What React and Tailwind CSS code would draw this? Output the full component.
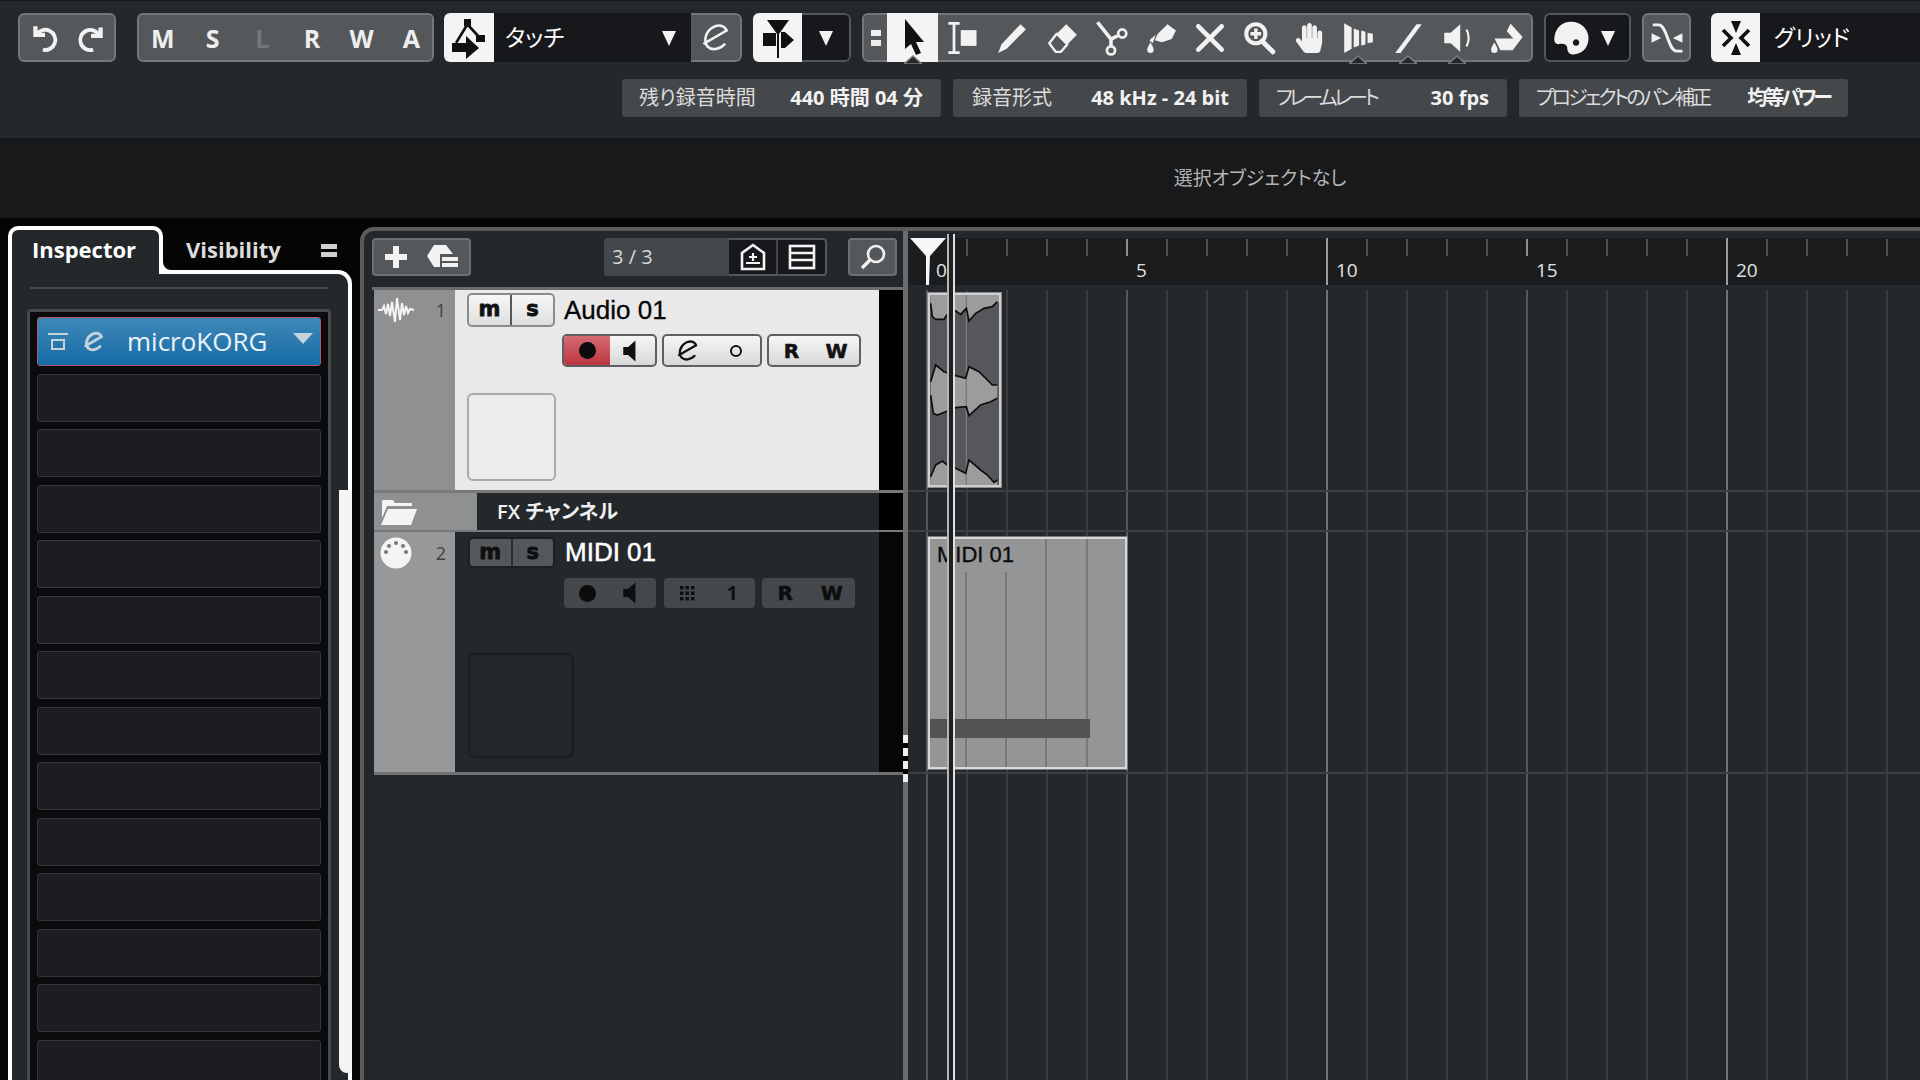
import React from 'react';
import { FaHandPaper } from 'react-icons/fa';

const Ico = ({ size = 34, box = 32, className = '', children }) => (
  <svg width={size} height={size} viewBox={`0 0 ${box} ${box}`} className={className} fill="currentColor">
    {children}
  </svg>
);

const Caret = ({ className = 'text-[#f2f2f2]' }) => (
  <svg width="16" height="18" viewBox="0 0 16 18" className={className} fill="currentColor">
    <polygon points="1,2 15,2 8,17" />
  </svg>
);

const UndoIcon = () => (
  <Ico>
    <path d="M8 13 a9.5 9.5 0 1 1 6 14" fill="none" stroke="currentColor" strokeWidth="3.6" />
    <polygon points="5,5 9,5 9,11 16,11 16,15 5,15" />
  </Ico>
);
const RedoIcon = () => (
  <Ico>
    <path d="M25 14 a9.5 9.5 0 1 0 -6 13" fill="none" stroke="currentColor" strokeWidth="3.6" />
    <polygon points="28,6 28,16 17,16 17,12 24,12 24,6" />
  </Ico>
);
const AutomationIcon = () => (
  <svg width="40" height="44" viewBox="0 0 40 44" className="text-[#111]" fill="currentColor">
    <rect x="15" y="3" width="7" height="7" />
    <path d="M18 9 L7 27 M19 9 L31 22" stroke="currentColor" strokeWidth="2.6" />
    <rect x="27" y="19" width="9" height="7" />
    <polygon points="3,27 17,27 17,20 30,32 17,43 17,36 3,36" />
  </svg>
);
const EditE = ({ size = 34, stroke = 2.4 }) => (
  <Ico size={size}>
    <path d="M5 21 L26 9 C24 4 18 3 13 6 C6 10 4 19 8 24 C12 28 19 27 24 22" fill="none" stroke="currentColor" strokeWidth={stroke} strokeLinecap="round" />
  </Ico>
);
const SnapIcon = () => (
  <svg width="40" height="44" viewBox="0 0 40 44" className="text-[#111]" fill="currentColor">
    <polygon points="9,4 31,4 21,18 19,18" />
    <rect x="19" y="14" width="2" height="28" />
    <rect x="5" y="17" width="13" height="13" />
    <polygon points="23,16 27,16 36,24 27,32 23,32" />
  </svg>
);
const ArrowIcon = () => (
  <svg width="32" height="44" viewBox="0 0 32 44" className="text-[#111]" fill="currentColor">
    <polygon points="8,3 8,33 14,28 19,39 24,37 19,26 27,26" />
  </svg>
);
const RangeIcon = () => (
  <Ico size={36}>
    <path d="M3 3 h10 M3 29 h10 M8 3 v26" stroke="currentColor" strokeWidth="2.4" fill="none" />
    <rect x="14" y="9" width="14" height="14" />
  </Ico>
);
const PencilIcon = () => (
  <Ico><polygon points="3,30 6,22 24,3 29,8 11,26" /></Ico>
);
const EraserIcon = () => (
  <Ico>
    <polygon points="20,3 30,13 21,22 11,12" />
    <path d="M11 12 L21 22 L15 29 L10 29 L4 21 Z" fill="none" stroke="currentColor" strokeWidth="2.2" strokeLinejoin="round" />
  </Ico>
);
const ScissorsIcon = () => (
  <Ico size={36}>
    <path d="M4 2 L16 17 L16 24 M16 17 L22 14" fill="none" stroke="currentColor" strokeWidth="3.2" />
    <circle cx="26" cy="12" r="3.6" fill="none" stroke="currentColor" strokeWidth="2.4" />
    <circle cx="16" cy="27" r="3.6" fill="none" stroke="currentColor" strokeWidth="2.4" />
  </Ico>
);
const GlueIcon = () => (
  <Ico>
    <polygon points="14,12 23,3 31,9 27,17 18,20 11,18" />
    <path d="M6 18 L12 13 L9 21 Z" />
    <path d="M7 20 C9 24 10 25 10 27 A3 3 0 0 1 4 27 C4 25 5 24 7 20 Z" />
  </Ico>
);
const CrossIcon = () => (
  <Ico>
    <path d="M5 5 L27 27 M27 5 L5 27" stroke="currentColor" strokeWidth="4.4" strokeLinecap="round" />
  </Ico>
);
const ZoomIcon = () => (
  <Ico>
    <circle cx="13" cy="12" r="9" fill="none" stroke="currentColor" strokeWidth="3.8" />
    <path d="M8 12 h10 M13 7 v10" stroke="currentColor" strokeWidth="3.2" />
    <path d="M19 19 L29 29" stroke="currentColor" strokeWidth="4.6" strokeLinecap="round" />
  </Ico>
);
const BarsIcon = () => (
  <Ico>
    <polygon points="3,2 10,6 10,26 3,30" />
    <polygon points="12,7 17,9 17,23 12,25" />
    <polygon points="19,9 23,10 23,22 19,23" />
    <polygon points="25,11 30,12 30,20 25,21" />
  </Ico>
);
const LineIcon = () => (
  <Ico><polygon points="4,30 24,3 29,3 9,30" /></Ico>
);
const SpeakerIcon = ({ wave = true, size = 34 }) => (
  <Ico size={size}>
    <polygon points="4,11 10,11 19,3 19,29 10,21 4,21" />
    {wave && <path d="M25 8 Q29 16 25 24" fill="none" stroke="currentColor" strokeWidth="2" />}
  </Ico>
);
const BucketIcon = () => (
  <Ico>
    <path d="M20 3 L31 15 L22 27 L11 27 L6 17 L24 17 L17 9" fill="currentColor" stroke="currentColor" strokeWidth="1" />
    <path d="M5 20 C7 24 8 25 8 27 A3 3 0 0 1 2 27 C2 25 3 24 5 20 Z" />
  </Ico>
);
const PaletteIcon = () => (
  <Ico size={40}>
    <path d="M16 3 C24 3 30 9 30 16 C30 22 27 28 19 29 C15 30 13 27 13 24 C13 21 9 20 6 21 C3 21 2 18 3 14 C4 8 9 3 16 3 Z M20 17 a2.6 2.6 0 1 0 0.1 0 Z" fillRule="evenodd" />
  </Ico>
);
const CrossfadeIcon = () => (
  <Ico size={38}>
    <path d="M4 5 L9 5 C16 5 17 27 24 27 L29 27" fill="none" stroke="currentColor" strokeWidth="2.4" />
    <polygon points="3,12 3,20 11,16" />
    <polygon points="29,12 29,20 21,16" />
  </Ico>
);
const GridSnapIcon = () => (
  <svg width="36" height="44" viewBox="0 0 36 44" className="text-[#111]" fill="currentColor">
    <polygon points="13,5 23,5 18,17" />
    <polygon points="13,39 23,39 18,27" />
    <path d="M5 14 L13 22 L5 30 M31 14 L23 22 L31 30" fill="none" stroke="currentColor" strokeWidth="3.6" />
  </svg>
);

const Notch = () => (
  <svg width="18" height="9" viewBox="0 0 18 9" className="absolute left-1/2 -translate-x-1/2 -bottom-[2px]">
    <polygon points="0,9 9,1 18,9" fill="#25282b" stroke="#7b7e81" strokeWidth="1.5" />
  </svg>
);

const tools = [
  { Icon: RangeIcon },
  { Icon: PencilIcon },
  { Icon: EraserIcon },
  { Icon: ScissorsIcon },
  { Icon: GlueIcon },
  { Icon: CrossIcon },
  { Icon: ZoomIcon },
  { Icon: () => <FaHandPaper size={30} /> },
  { Icon: BarsIcon, notch: true },
  { Icon: LineIcon, notch: true },
  { Icon: SpeakerIcon, notch: true },
  { Icon: BucketIcon },
];

const groupCls = 'flex h-[49px] rounded-[6px] border-2 border-[#73767a] bg-[#55585b] text-[#f2f2f2] overflow-hidden';
const darkGroupCls = 'flex h-[49px] rounded-[6px] border-2 border-[#54575a] bg-[#17181b] text-[#f2f2f2]';

const InfoBox = ({ w, label, value, pl, labelCls = '', valueCls = '' }) => (
  <div className={`flex h-[38px] items-center justify-between rounded-[3px] bg-[#45484b] pr-[18px] ${w} ${pl}`}>
    <span className={`text-[20px] text-[#dcdcdc] ${labelCls}`}>{label}</span>
    <span className={`text-[20px] font-bold text-[#f2f2f2] ${valueCls}`}>{value}</span>
  </div>
);

const Toolbar = () => (
  <div className="h-[138px] shrink-0 border-t border-[#15171a] bg-[#25282b] pt-[12px]">
    <div className="flex gap-[11px]">
      <div className={`${groupCls} ml-[18px] w-[98px] items-center justify-around px-[2px]`}>
        <UndoIcon />
        <RedoIcon />
      </div>
      <div className={`${groupCls} ml-[10px] w-[297px] items-center text-[25px] font-bold`}>
        <div className="-ml-[1px] flex pt-[2px]">
          {['M', 'S', 'L', 'R', 'W', 'A'].map((l) => (
            <span key={l} className={l === 'L' ? 'w-[49.7px] shrink-0 text-center text-[#74777a]' : 'w-[49.7px] shrink-0 text-center text-[#eeeeee]'}>{l}</span>
          ))}
        </div>
      </div>
      <div className="ml-[-1px] flex h-[49px] w-[298px] overflow-hidden rounded-[6px] bg-[#17181b]">
        <div className="flex w-[50px] items-center justify-center bg-[#f4f4f4]"><AutomationIcon /></div>
        <div className="flex flex-1 items-center pl-[11px] pr-[14px] text-[23px] text-white">
          <span className="flex-1">タッチ</span>
          <Caret />
        </div>
        <div className="flex w-[51px] items-center justify-center rounded-r-[6px] border-2 border-l-0 border-[#73767a] bg-[#55585b] text-[#f2f2f2]"><EditE /></div>
      </div>
      <div className="flex h-[49px] w-[98px] overflow-hidden rounded-[6px] bg-[#17181b]">
        <div className="flex w-[49px] items-center justify-center bg-[#f4f4f4]"><SnapIcon /></div>
        <div className="flex flex-1 items-center justify-center rounded-r-[6px] border-2 border-l-0 border-[#54575a]"><Caret /></div>
      </div>
      <div className="relative flex h-[49px] w-[671px] items-stretch rounded-[6px] border-2 border-[#73767a] bg-[#55585b] text-[#f2f2f2]">
        <div className="flex w-[23px] flex-col items-center justify-center gap-[4px]">
          <span className="h-[6px] w-[10px] bg-[#eeeeee]" />
          <span className="h-[6px] w-[10px] bg-[#eeeeee]" />
        </div>
        <div className="relative -my-[2px] flex w-[51px] items-center justify-center bg-[#f4f4f4]">
          <ArrowIcon />
          <Notch />
        </div>
        {tools.map(({ Icon, notch }, i) => (
          <div key={i} className="relative -my-[2px] flex flex-1 items-center justify-center">
            <Icon />
            {notch && <Notch />}
          </div>
        ))}
      </div>
      <div className={`${darkGroupCls} w-[87px] items-center pl-[5px]`}>
        <PaletteIcon />
        <span className="ml-[9px] flex"><Caret /></span>
      </div>
      <div className={`${groupCls} w-[49px] items-center justify-center`}><CrossfadeIcon /></div>
      <div className="ml-[9px] flex h-[49px] flex-1 overflow-hidden rounded-l-[6px] bg-[#17181b]">
        <div className="flex w-[49px] items-center justify-center bg-[#f4f4f4]"><GridSnapIcon /></div>
        <div className="flex flex-1 items-center pl-[14px] text-[23px] text-white">グリッド</div>
      </div>
    </div>
    <div className="ml-[622px] mt-[17px] flex gap-[12px]">
      <InfoBox w="w-[319px]" pl="pl-[17px]" label="残り録音時間" value="440 時間 04 分" />
      <InfoBox w="w-[294px]" pl="pl-[19px]" label="録音形式" value="48 kHz - 24 bit" />
      <InfoBox w="w-[248px]" pl="pl-[17px]" label="フレームレート" labelCls="tracking-[-3.5px]" value="30 fps" />
      <InfoBox w="w-[329px]" pl="pl-[17px]" label="プロジェクトのパン補正" labelCls="tracking-[-2.8px]" value="均等パワー" valueCls="tracking-[-3px]" />
    </div>
  </div>
);

const Inspector = () => (
  <div className="relative flex h-full w-[344px] shrink-0 flex-col">
    <div className="relative z-10 flex h-[48px] shrink-0 items-start">
      <div className="h-[48px] w-[155px] rounded-t-[10px] border-4 border-b-0 border-white bg-[#25282b] pl-[20px] pt-[4px] text-[22px] font-bold leading-[30px] text-white">
        Inspector
      </div>
      <div className="ml-[23px] pt-[8px] text-[22px] font-bold leading-[30px] text-[#dcdcdc]">Visibility</div>
      <div className="ml-[40px] mt-[18px] flex flex-col gap-[3px]">
        <span className="h-[5px] w-[16px] bg-[#d0d0d0]" />
        <span className="h-[5px] w-[16px] bg-[#d0d0d0]" />
      </div>
    </div>
    <div className="absolute left-[155px] top-[34px] z-20 h-[10px] w-[10px] bg-white">
      <div className="h-full w-full rounded-bl-[8px] bg-[#050505]" />
    </div>
    <div className="-mt-[4px] min-h-0 flex-1 overflow-hidden rounded-tr-[14px] border-x-4 border-t-4 border-white bg-[#25282b]">
      <div className="ml-[18px] mt-[13px] h-[2px] w-[298px] bg-[#47494b]" />
      <div className="ml-[15px] mt-[20px] flex h-[800px] w-[304px] flex-col gap-[7.5px] rounded-t-[4px] border-x-[3px] border-t-[3px] border-[#48494b] bg-[#0a0b0c] px-[7px] pt-[5px]">
        <div className="relative flex h-[49px] shrink-0 items-center rounded-[3px] border border-[#b0566e] bg-gradient-to-b from-[#3d88b8] to-[#146ba6] text-[#c4d2dc]">
          <svg width="22" height="22" viewBox="0 0 22 22" className="ml-[9px]" fill="none" stroke="currentColor" strokeWidth="2">
            <path d="M1 3 h20" />
            <rect x="5" y="9" width="12" height="9" />
          </svg>
          <span className="ml-[13px]"><EditE size={24} stroke={3.8} /></span>
          <span className="ml-[21px] text-[26px] text-[#eaf2f8]">microKORG</span>
          <svg width="20" height="13" viewBox="0 0 20 13" className="absolute right-[7px] top-[14px]" fill="currentColor"><polygon points="0,1 20,1 10,12" /></svg>
        </div>
        {Array.from({ length: 13 }).map((_, i) => (
          <div key={i} className="h-[48px] shrink-0 rounded-[3px] border border-[#33363a] bg-[#1b1d21]" />
        ))}
      </div>
    </div>
    <div className="absolute bottom-[7px] right-0 top-[264px] z-20 w-[13px] rounded-bl-[8px] bg-[#f4f4f4]" />
  </div>
);

const blockCls = "flex flex-1 items-center justify-center [font-family:'DejaVu_Sans'] text-[21px] font-bold [-webkit-text-stroke:0.8px_currentColor]";

const MS = ({ dark }) => (
  <div className={dark
    ? 'flex h-[31px] w-[87px] rounded-[5px] border-2 border-[#1c1e20] bg-[#55585b] text-[#0e0f10]'
    : 'flex h-[34px] w-[88px] rounded-[5px] border-2 border-[#8a8b8d] bg-gradient-to-b from-[#f7f7f7] to-[#dfdfdf] text-[#111]'}>
    <span className={`${blockCls} ${dark ? 'border-r-2 border-[#2b2d30]' : 'border-r-2 border-[#55585b]'}`}>m</span>
    <span className={blockCls}>s</span>
  </div>
);

const TrackBtn = ({ w, light, children }) => (
  <div className={light
    ? `flex items-center overflow-hidden rounded-[5px] border-2 border-[#5d5f62] bg-gradient-to-b from-[#f6f6f6] to-[#d8d8d8] text-[#111] ${w}`
    : `flex items-center overflow-hidden rounded-[4px] bg-[#45484b] text-[#0d0e0f] ${w}`}>
    {children}
  </div>
);

const Cell = ({ children }) => <span className="flex h-full flex-1 items-center justify-center">{children}</span>;
const Dot = () => <span className="h-[17px] w-[17px] rounded-full bg-[#0c0c0c]" />;
const Letter = ({ children }) => <span className="[font-family:'DejaVu_Sans'] text-[20px] font-bold leading-none [-webkit-text-stroke:0.6px_currentColor]">{children}</span>;

const AudioWaveIcon = () => (
  <svg width="38" height="28" viewBox="0 0 38 28" fill="none" stroke="#f4f4f4" strokeWidth="2">
    <path d="M1 14 H5 L7 10 L9 18 L11 8 L13 20 L15 6 L18 26 L20 2 L23 24 L25 7 L27 19 L29 10 L31 17 L33 13 L37 14" />
  </svg>
);
const FolderIcon = () => (
  <svg width="38" height="28" viewBox="0 0 38 28" fill="#f4f4f4">
    <path d="M3 2 H13 L15 5 H32 V8 H7 L2 20 V3 Z" />
    <polygon points="8,11 37,11 31,27 1,27" />
  </svg>
);
const MidiIcon = () => (
  <svg width="32" height="32" viewBox="0 0 32 32">
    <circle cx="16" cy="16" r="15.5" fill="#f4f4f4" />
    {[[6, 15], [9, 9], [16, 6], [23, 9], [26, 15]].map(([cx, cy]) => (
      <circle key={cx} cx={cx} cy={cy} r="2" fill="#777" />
    ))}
  </svg>
);

const TrackList = () => (
  <div className="flex h-full w-[539px] shrink-0 flex-col">
    <div className="ml-[8px] mt-[7px] flex h-[38px] shrink-0">
      <div className="flex w-[99px] items-center justify-around rounded-[4px] border-2 border-[#6d7073] bg-[#55585b] text-[#f2f2f2]">
        <svg width="26" height="26" viewBox="0 0 26 26" fill="currentColor"><path d="M10 2 h6 v8 h8 v6 h-8 v8 h-6 v-8 h-8 v-6 h8 Z" /></svg>
        <svg width="34" height="28" viewBox="0 0 34 28" fill="currentColor">
          <polygon points="8,2 20,2 27,11 14,11 14,24 8,24 1,13" />
          <rect x="16" y="14" width="16" height="4" />
          <rect x="16" y="20" width="16" height="4" />
        </svg>
      </div>
      <div className="ml-[133px] flex w-[125px] items-center rounded-l-[3px] bg-[#45484b] pl-[8px] text-[20px] text-[#d8d8d8]">3 / 3</div>
      <div className="flex w-[98px] rounded-r-[4px] border-2 border-l-0 border-[#54575a] bg-[#17181b] text-[#f4f4f4]">
        <div className="flex flex-1 items-center justify-center border-r-2 border-[#45484b]">
          <svg width="28" height="28" viewBox="0 0 28 28" fill="none" stroke="currentColor" strokeWidth="2.6">
            <path d="M3 26 V10 L14 2 L25 10 V26 Z" />
            <path d="M10 14 h8 M14 10 v8 M7 20 h14" strokeWidth="2.2" />
          </svg>
        </div>
        <div className="flex flex-1 items-center justify-center">
          <svg width="28" height="26" viewBox="0 0 28 26" fill="none" stroke="currentColor" strokeWidth="2.6">
            <rect x="2" y="2" width="24" height="22" />
            <path d="M2 9 h24 M2 16 h24" />
          </svg>
        </div>
      </div>
      <div className="ml-[21px] flex w-[49px] items-center justify-center rounded-[4px] border-2 border-[#6d7073] bg-[#55585b] text-[#f2f2f2]">
        <svg width="28" height="28" viewBox="0 0 28 28" fill="none" stroke="currentColor" strokeWidth="2.6">
          <circle cx="17" cy="11" r="8" />
          <path d="M11 17 L3 25" strokeWidth="3.4" />
        </svg>
      </div>
    </div>
    <div className="ml-[8px] mt-[11px] h-[3px] w-[531px] shrink-0 bg-[#6a6c6e]" />
    <div className="ml-[10px] flex w-[529px] shrink-0 flex-col">
      {/* audio */}
      <div className="flex h-[200px]">
        <div className="flex w-[81px] items-start justify-between bg-[#8f9092] pl-[3px] pr-[9px] pt-[6px]">
          <AudioWaveIcon />
          <span className="text-[18px] leading-[28px] text-[#3f4144]">1</span>
        </div>
        <div className="flex w-[424px] flex-col bg-[#e9e9e9] pl-[12px] pt-[3px]">
          <div className="flex items-center">
            <MS />
            <span className="ml-[9px] [font-family:'Liberation_Sans'] text-[26px] leading-[34px] text-[#050505] [-webkit-text-stroke:0.3px_currentColor]">Audio 01</span>
          </div>
          <div className="ml-[95px] mt-[7px] flex h-[33px] gap-[5px]">
            <TrackBtn w="w-[95px]" light>
              <span className="flex h-full w-[46px] items-center justify-center bg-gradient-to-b from-[#d56a73] to-[#bb3341]"><Dot /></span>
              <Cell><SpeakerIcon wave={false} size={26} /></Cell>
            </TrackBtn>
            <TrackBtn w="w-[100px]" light>
              <Cell><EditE size={26} stroke={2.8} /></Cell>
              <Cell><span className="h-[12px] w-[12px] rounded-full border-2 border-[#111]" /></Cell>
            </TrackBtn>
            <TrackBtn w="w-[94px]" light>
              <Cell><Letter>R</Letter></Cell>
              <Cell><Letter>W</Letter></Cell>
            </TrackBtn>
          </div>
          <div className="mt-[26px] h-[88px] w-[89px] rounded-[6px] border-2 border-[#a9aaac] bg-[#ececec]" />
        </div>
        <div className="w-[24px] bg-black" />
      </div>
      <div className="h-[3px] bg-[#77797b]" />
      {/* fx */}
      <div className="flex h-[37px]">
        <div className="flex w-[103px] items-center bg-[#8f9092] pl-[6px]"><FolderIcon /></div>
        <div className="flex w-[402px] items-center bg-[#25282b] pl-[20px] text-[20px] font-semibold text-[#f0f0f0]">FX チャンネル</div>
        <div className="w-[24px] bg-black" />
      </div>
      <div className="h-[2px] bg-[#77797b]" />
      {/* midi */}
      <div className="flex h-[243px] border-b-[3px] border-[#6f7173]">
        <div className="flex w-[81px] items-start justify-between bg-[#97989a] pl-[6px] pr-[9px] pt-[5px]">
          <MidiIcon />
          <span className="text-[18px] leading-[32px] text-[#3f4144]">2</span>
        </div>
        <div className="flex w-[424px] flex-col bg-[#25282b] pl-[13px] pt-[5px]">
          <div className="flex items-center">
            <MS dark />
            <span className="ml-[10px] [font-family:'Liberation_Sans'] text-[26px] leading-[31px] text-white [-webkit-text-stroke:0.5px_currentColor]">MIDI 01</span>
          </div>
          <div className="ml-[96px] mt-[10px] flex h-[30px]">
            <TrackBtn w="w-[92px]">
              <Cell><Dot /></Cell>
              <Cell><SpeakerIcon wave={false} size={26} /></Cell>
            </TrackBtn>
            <span className="ml-[8px] flex">
              <TrackBtn w="w-[91px]">
                <Cell>
                  <svg width="16" height="16" viewBox="0 0 16 16" fill="currentColor">
                    {[1, 6.5, 12].map((y) => [1, 6.5, 12].map((x) => <rect key={`${x}-${y}`} x={x} y={y} width="3.4" height="3.4" />))}
                  </svg>
                </Cell>
                <Cell><span className="text-[19px] font-bold leading-none">1</span></Cell>
              </TrackBtn>
            </span>
            <span className="ml-[7px] flex">
              <TrackBtn w="w-[93px]">
                <Cell><Letter>R</Letter></Cell>
                <Cell><Letter>W</Letter></Cell>
              </TrackBtn>
            </span>
          </div>
          <div className="mt-[45px] h-[105px] w-[106px] rounded-[6px] border-2 border-[#1b1d1f] bg-[#242729]" />
        </div>
        <div className="w-[24px] bg-[#060606]" />
      </div>
    </div>
  </div>
);

const Handle = () => (
  <div className="relative h-full w-[5px] shrink-0 bg-[#6a6c6e]">
    <div className="absolute left-0 top-[504px] flex h-[47px] w-[5px] flex-col justify-between bg-black">
      {[0, 1, 2, 3].map((i) => <span key={i} className="h-[8px] bg-[#f0f0f0]" />)}
    </div>
  </div>
);

// cells are 40px wide, one per second
const SECS = Array.from({ length: 25 }, (_, i) => i);

const Ruler = () => (
  <div className="mt-[7px] flex h-[47px] shrink-0 bg-[#1b1c1e] pl-[18px]">
    {SECS.map((s) => {
      const tall = s > 0 && s % 10 === 0;
      const five = s % 5 === 0;
      return (
        <div key={s} className="flex h-full w-[40px] shrink-0">
          <span className={tall ? 'h-full w-[2px] shrink-0 bg-[#9a9b9d]' : five ? 'mt-[1px] h-[17px] w-[2px] shrink-0 bg-[#8d8e90]' : 'mt-[1px] h-[17px] w-[2px] shrink-0 bg-[#4f5153]'} />
          {five && <span className="ml-[8px] mt-[20px] text-[19px] leading-[24px] text-[#e2e2e2]">{s}</span>}
        </div>
      );
    })}
  </div>
);

const AudioEvent = () => (
  <div className="absolute left-[20px] top-[8px] h-[194px] w-[73px] overflow-hidden border-2 border-[#cfcfcf] bg-[#55575a] shadow-[0_0_0_1px_#8a8b8d]">
    <svg width="69" height="190" viewBox="88 210 207 570" preserveAspectRatio="none" className="block">
      <g fill="#9b9c9e">
        <path d="M88 205 H295 V230 L275 245 L250 250 L225 265 L205 288 L197 250 L180 268 L165 258 L140 268 L130 283 L105 283 L95 275 L90 235 Z" />
        <path d="M90 470 L105 420 L130 440 L165 452 L195 460 L205 425 L235 440 L260 465 L275 480 L290 480 V520 L270 530 L240 540 L205 572 L197 545 L165 548 L135 560 L110 570 L98 565 L90 510 Z" />
        <path d="M90 755 L105 720 L125 708 L140 720 L165 730 L195 745 L205 705 L240 735 L260 750 L280 772 L290 765 V785 H88 Z" />
      </g>
      <path d="M197 210 V780" stroke="#7a7b7d" strokeWidth="4" />
      <g fill="none" stroke="#0d0d0d" strokeWidth="5">
        <path d="M90 235 L95 275 L105 283 L130 283 L140 268 L165 258 L180 268 L197 250 L205 288 L225 265 L250 250 L275 245 L290 230" />
        <path d="M90 470 L105 420 L130 440 L165 452 L195 460 L205 425 L235 440 L260 465 L275 480 L290 480" />
        <path d="M90 510 L98 565 L110 570 L135 560 L165 548 L197 545 L205 572 L240 540 L270 530 L290 520" />
        <path d="M90 755 L105 720 L125 708 L140 720 L165 730 L195 745 L205 705 L240 735 L260 750 L280 772 L290 765" />
      </g>
    </svg>
  </div>
);

const MidiEvent = () => (
  <div className="absolute left-[20px] top-[252px] flex h-[232px] w-[199px] overflow-hidden border-2 border-[#d8d8d8] bg-[#949597] shadow-[0_0_0_1px_#77797b]">
    <span className="absolute left-[7px] top-[3px] [font-family:'Liberation_Sans'] text-[22px] leading-[26px] text-[#0a0a0a] [-webkit-text-stroke:0.3px_currentColor]">MIDI 01</span>
    <span className="absolute bottom-0 left-[35px] top-[33px] w-[2px] bg-[#77787a]" />
    <span className="absolute bottom-0 left-[75px] top-[33px] w-[2px] bg-[#77787a]" />
    <span className="absolute bottom-0 left-[115px] top-0 w-[2px] bg-[#77787a]" />
    <span className="absolute bottom-0 left-[156px] top-0 w-[2px] bg-[#77787a]" />
    <span className="absolute left-0 top-[180px] h-[19px] w-[160px] bg-[#515355]" />
  </div>
);

const Timeline = () => (
  <div className="relative min-w-0 flex-1 overflow-hidden">
    <Ruler />
    <div className="relative h-[795px]">
      <div className="flex h-full pl-[18px] pt-[5px]">
        {SECS.map((s) => (
          <div
            key={s}
            className={s > 0 && s % 10 === 0
              ? 'w-[40px] shrink-0 border-l-2 border-[#717375]'
              : s % 5 === 0
                ? 'w-[40px] shrink-0 border-l-2 border-[#55585a]'
                : 'w-[40px] shrink-0 border-l-2 border-[#3a3d40]'}
          />
        ))}
      </div>
      <div className="absolute inset-x-0 top-[205px] h-[2px] bg-[#3d4043]" />
      <div className="absolute inset-x-0 top-[245px] h-[2px] bg-[#3d4043]" />
      <div className="absolute inset-x-0 top-[487px] h-[2px] bg-[#3d4043]" />
      <AudioEvent />
      <MidiEvent />
    </div>
    {/* cursors + playhead */}
    <div className="absolute bottom-0 left-[39px] top-[3px] w-[2px] bg-[#b5b6b8]" />
    <div className="absolute bottom-0 left-[41px] top-[3px] w-[4px] bg-[#1d1f21]" />
    <div className="absolute bottom-0 left-[45px] top-[3px] w-[2px] bg-[#e0e0e0]" />
    <svg width="36" height="48" viewBox="0 0 36 48" className="absolute left-[2px] top-[7px]" fill="#f6f6f6">
      <polygon points="0,0 36,0 20,18 19,47 16,47 16,18" />
    </svg>
  </div>
);

export default function App() {
  return (
    <div className="flex h-[1080px] w-[1920px] flex-col overflow-hidden bg-black [font-family:'Open_Sans','Noto_Sans_CJK_JP',sans-serif] [font-feature-settings:'palt']">
      <Toolbar />
      <div className="flex h-[80px] shrink-0 items-center justify-center bg-[#18191b] pl-[600px] text-[19px] text-[#b4b4b4]">
        選択オブジェクトなし
      </div>
      <div className="flex min-h-0 flex-1 gap-[8px] bg-[#050505] pl-[8px] pt-[8px]">
        <Inspector />
        <div className="mt-[1px] flex min-w-0 flex-1 rounded-tl-[14px] border-l-4 border-t-4 border-[#595b5d] bg-[#25282b]">
          <TrackList />
          <Handle />
          <Timeline />
        </div>
      </div>
    </div>
  );
}
